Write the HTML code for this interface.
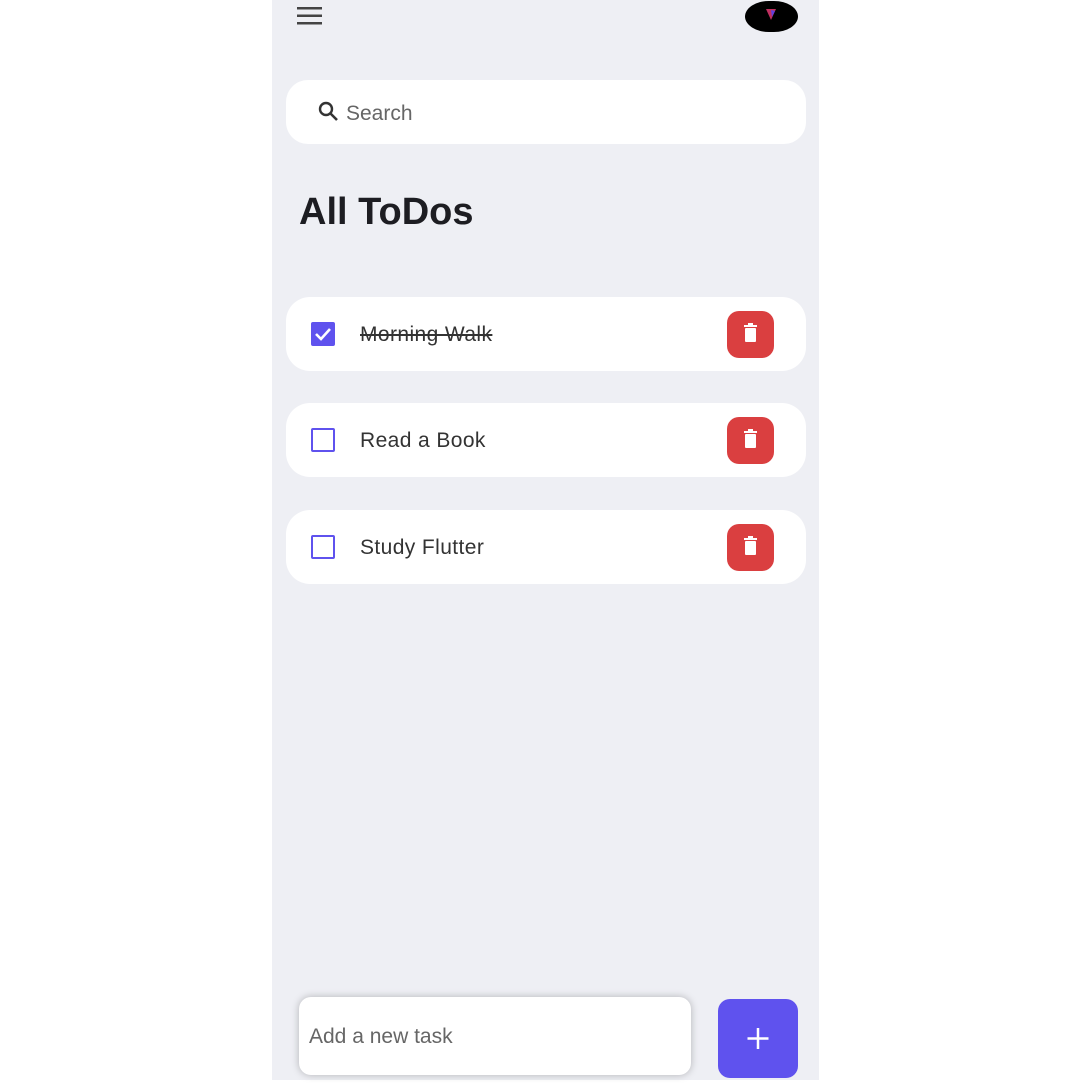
<!DOCTYPE html>
<html><head><meta charset="utf-8"><style>
*{margin:0;padding:0;box-sizing:border-box}
body{width:1080px;height:1080px;background:#fff;position:relative;font-family:"Liberation Sans",sans-serif;overflow:hidden}
.app{position:absolute;left:272px;top:0;width:547px;height:1080px;background:#eeeff4}
.abs{position:absolute}
.search{left:14px;top:80px;width:520px;height:64px;background:#fff;border-radius:22px}
.card{left:14px;width:520px;height:74px;background:#fff;border-radius:24px}
.cb{position:absolute;left:25px;top:25px;width:24px;height:24px;border:2.5px solid #5f52ee;border-radius:2px}
.txt{position:absolute;left:74px;top:1px;line-height:74px;font-size:21px;color:#333;letter-spacing:.4px}
.del{position:absolute;left:441px;top:14px;width:47px;height:47px;background:#da3f40;border-radius:12px}
</style></head><body>
<div class="app">
 <svg class="abs" style="left:25px;top:7px" width="26" height="18"><rect y="0" width="25" height="2.5" fill="#444"/><rect y="7.5" width="25" height="2.5" fill="#444"/><rect y="15" width="25" height="2.5" fill="#444"/></svg>
 <div class="abs" style="left:473px;top:1px;width:53px;height:31px;background:#000;border-radius:50%/55%"></div>
 <svg class="abs" style="left:491px;top:6px" width="16" height="16"><path d="M3 3 L13 3 L8 14Z" fill="#c03060"/><path d="M8 4 L12 5 L9 11Z" fill="#6040e0"/></svg>
 <div class="abs search">
  <svg class="abs" style="left:32px;top:21px" width="22" height="22" viewBox="0 0 22 22"><circle cx="8" cy="8" r="6" fill="none" stroke="#333" stroke-width="2.4"/><path d="M12.5 12.5 L19 19" stroke="#333" stroke-width="2.6"/></svg>
  <div class="abs" style="left:60px;top:1px;line-height:66px;font-size:21px;color:#666">Search</div>
 </div>
 <div class="abs" style="left:27px;top:191px;font-size:38px;font-weight:bold;color:#1d1d22">All ToDos</div>

 <div class="abs card" style="top:297px">
  <div class="cb" style="background:#5f52ee"><svg width="20" height="20" style="position:absolute;left:0;top:0"><path d="M3 10 L8 15 L17 5" fill="none" stroke="#fff" stroke-width="2.6"/></svg></div>
  <div class="txt" style="text-decoration:line-through">Morning Walk</div>
  <div class="del"><svg width="47" height="47"><rect x="17" y="14" width="13" height="2" fill="#fff"/><rect x="21" y="12" width="5" height="2" fill="#fff"/><rect x="18" y="17" width="11" height="14" rx="1" fill="#fff"/></svg></div>
 </div>
 <div class="abs card" style="top:403px">
  <div class="cb"></div>
  <div class="txt">Read a Book</div>
  <div class="del"><svg width="47" height="47"><rect x="17" y="14" width="13" height="2" fill="#fff"/><rect x="21" y="12" width="5" height="2" fill="#fff"/><rect x="18" y="17" width="11" height="14" rx="1" fill="#fff"/></svg></div>
 </div>
 <div class="abs card" style="top:510px">
  <div class="cb"></div>
  <div class="txt">Study Flutter</div>
  <div class="del"><svg width="47" height="47"><rect x="17" y="14" width="13" height="2" fill="#fff"/><rect x="21" y="12" width="5" height="2" fill="#fff"/><rect x="18" y="17" width="11" height="14" rx="1" fill="#fff"/></svg></div>
 </div>

 <div class="abs" style="left:27px;top:997px;width:392px;height:78px;background:#fff;border-radius:12px;box-shadow:0 0 8px rgba(0,0,0,.25)">
  <div class="abs" style="left:10px;top:0;line-height:80px;font-size:21px;color:#666">Add a new task</div>
 </div>
 <div class="abs" style="left:446px;top:999px;width:80px;height:79px;background:#5f52ee;border-radius:12px">
  <svg width="80" height="79"><path d="M40 29 V50 M29.5 39.5 H50.5" stroke="#fff" stroke-width="2.5"/></svg>
 </div>
</div>
</body></html>
